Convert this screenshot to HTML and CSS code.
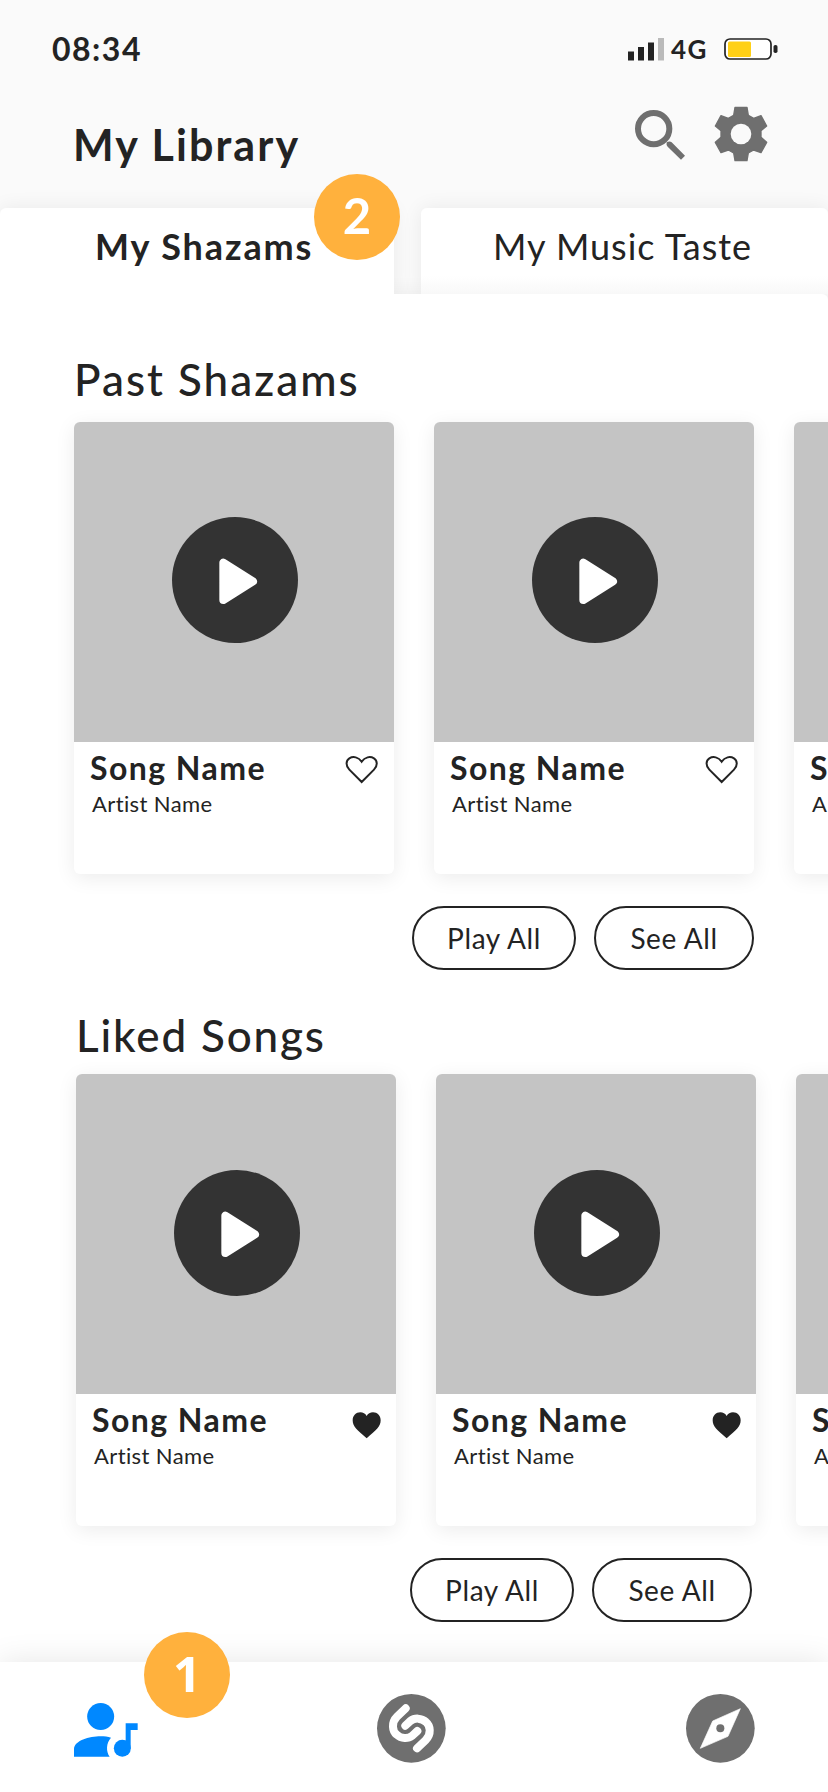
FILE: index.html
```html
<!DOCTYPE html>
<html lang="en">
<head>
<meta charset="utf-8">
<title>My Library</title>
<link rel="stylesheet" href="styles.css">
</head>
<body>
<svg class="defs" aria-hidden="true">
  <symbol id="play" viewBox="0 0 378 378">
    <circle cx="189" cy="189" r="189" fill="#333"/>
    <path d="M154 137V249L243 193Z" fill="#fff" stroke="#fff" stroke-width="24" stroke-linejoin="round"/>
  </symbol>
  <symbol id="heart" viewBox="886 105 102 90">
    <path d="M936 186L899 149C888 138 888 122 899 115C911 108 926 111 936 125C946 111 961 108 973 115C984 122 984 138 973 149Z" fill="none" stroke="#232323" stroke-width="6"/>
  </symbol>
  <symbol id="heart-full" viewBox="898 119 102 90">
    <path d="M948 204C919 179 906 168 906 150C906 136 916 126 929 126C937 126 944 130 948 137C952 130 959 126 967 126C980 126 990 136 990 150C990 168 977 179 948 204Z" fill="#232323"/>
  </symbol>
</svg>
<div class="screen">
  <header class="header">
    <div class="status">
      <span class="time">08:34</span>
      <div class="indicators">
        <svg class="signal" viewBox="0 0 36 23"><path d="M0 13.500h6V22.500H0zM10 9h6v13.500h-6zM20 4.500h6v18h-6z" fill="#232323"/><path d="M30 0h6v22.500h-6z" fill="#bababa"/></svg>
        <span class="network">4G</span>
        <svg class="battery" viewBox="0 0 54 22"><rect x="1" y="1" width="46" height="20" rx="5" fill="#fff" stroke="#232323" stroke-width="1.700"/><rect x="4" y="3.500" width="23" height="15.500" rx="1.500" fill="#ffd016"/><rect x="49.500" y="7" width="4" height="8" rx="1.800" fill="#232323"/></svg>
      </div>
    </div>
    <div class="titlebar">
      <h1 class="title">My Library</h1>
      <div class="actions">
        <svg class="search" viewBox="666 330 150 150"><circle cx="722" cy="386" r="47" fill="none" stroke="#6f6f6f" stroke-width="18"/><path d="M761 427Q759 437 764 440L804 479L816 467L776 427Q770 422 761 427Z" fill="#6f6f6f"/></svg>
        <svg class="gear" viewBox="-84 -84 168 168"><path d="M-18-80H18L22-56L38-47L60-55L77-24L60-10V10L77 25L60 56L38 48L22 57L18 80H-18L-22 57L-38 48L-60 56L-77 25L-60 10V-10L-77-24L-60-55L-38-47L-22-56Z" fill="#6f6f6f" stroke="#6f6f6f" stroke-width="4" stroke-linejoin="round"/><circle r="31" fill="#fafafa"/></svg>
      </div>
    </div>
  </header>
  <nav class="tabs">
    <a class="tab active"><span class="tab-on">My Shazams</span></a>
    <a class="tab other"><span class="tab-off">My Music Taste</span></a>
    <span class="badge badge-two">2</span>
  </nav>
  <main class="content">
    <section class="section past">
      <h2 class="heading past-heading">Past Shazams</h2>
      <div class="cards">
        <article class="card"><div class="cover"><svg class="play"><use href="#play"/></svg></div><div class="info"><div class="names"><h3 class="song">Song Name</h3><p class="artist">Artist Name</p></div><svg class="heart"><use href="#heart"/></svg></div></article>
        <article class="card"><div class="cover"><svg class="play"><use href="#play"/></svg></div><div class="info"><div class="names"><h3 class="song">Song Name</h3><p class="artist">Artist Name</p></div><svg class="heart"><use href="#heart"/></svg></div></article>
        <article class="card"><div class="cover"><svg class="play"><use href="#play"/></svg></div><div class="info"><div class="names"><h3 class="song">Song Name</h3><p class="artist">Artist Name</p></div><svg class="heart"><use href="#heart"/></svg></div></article>
      </div>
      <div class="buttons"><button class="pill play-all">Play All</button><button class="pill see-all">See All</button></div>
    </section>
    <section class="section liked">
      <h2 class="heading liked-heading">Liked Songs</h2>
      <div class="cards">
        <article class="card"><div class="cover"><svg class="play"><use href="#play"/></svg></div><div class="info"><div class="names"><h3 class="song">Song Name</h3><p class="artist">Artist Name</p></div><svg class="heart full"><use href="#heart-full"/></svg></div></article>
        <article class="card"><div class="cover"><svg class="play"><use href="#play"/></svg></div><div class="info"><div class="names"><h3 class="song">Song Name</h3><p class="artist">Artist Name</p></div><svg class="heart full"><use href="#heart-full"/></svg></div></article>
        <article class="card"><div class="cover"><svg class="play"><use href="#play"/></svg></div><div class="info"><div class="names"><h3 class="song">Song Name</h3><p class="artist">Artist Name</p></div><svg class="heart full"><use href="#heart-full"/></svg></div></article>
      </div>
      <div class="buttons"><button class="pill play-all">Play All</button><button class="pill see-all">See All</button></div>
    </section>
  </main>
  <footer class="navbar">
    <svg class="nav-user" viewBox="222 249 192 162"><g fill="#08f"><circle cx="302" cy="289.500" r="40.500"/><path d="M222 410V388C222 362 268 349 302 349C313 349 324 350 333 353C318 370 318 394 329 410Z"/><circle cx="367" cy="385" r="25.500"/><path d="M377 310H413V330H392V385H377Z"/></g></svg>
    <svg class="nav-shazam" viewBox="-103 -103 206 206"><circle r="103" fill="#6f6f6f"/><g fill="none" stroke="#fff" stroke-width="24" stroke-linecap="round" stroke-linejoin="round"><path d="M-17-60L-43-35C-61-17-57 8-44 19C-30 32-10 32 3 22L18 8"/><path d="M17 60L43 35C61 17 57-8 44-19C30-32 10-32-3-22L-18-8"/></g></svg>
    <svg class="nav-compass" viewBox="-103 -103 206 206"><circle r="103" fill="#6f6f6f"/><path d="M60-59L23 24L-60 60L-23-22Z" fill="#fff" stroke="#fff" stroke-width="2" stroke-linejoin="round"/><circle r="12" fill="#6f6f6f"/></svg>
    <span class="badge badge-one">1</span>
  </footer>
</div>
</body>
</html>
```

FILE: styles.css
```css
* { box-sizing: border-box; }
body { margin: 0; background: #fff; color: #232323; font-family: Lato, "Liberation Sans", sans-serif; }
h1, h2, h3, p { margin: 0; font-weight: 400; white-space: nowrap; }
svg { display: block; flex: none; }
.defs { position: absolute; width: 0; height: 0; }
.screen { width: 828px; height: 1792px; overflow: hidden; display: flex; flex-direction: column; background: #fafafa; }

.header { height: 208px; flex: none; }
.status { height: 98px; padding: 0 50px 0 52px; display: flex; justify-content: space-between; align-items: center; }
.time { font-size: 32px; font-weight: 700; line-height: 40px; letter-spacing: 1.500px; }
.indicators { display: flex; align-items: center; }
.signal { width: 36px; height: 23px; margin-top: 1px; }
.network { font-size: 26px; font-weight: 700; line-height: 30px; width: 53px; margin: 0 0 0 7px; letter-spacing: 1.500px; }
.battery { width: 54px; height: 22px; }
.titlebar { padding: 0 59px 0 73px; display: flex; justify-content: space-between; align-items: flex-start; }
.title { font-size: 43px; font-weight: 700; line-height: 52px; padding-top: 21px; letter-spacing: 2.100px; }
.actions { display: flex; gap: 28px; padding-top: 8px; }
.search { width: 50px; height: 50px; margin-top: 4px; }
.gear { width: 56px; height: 56px; }

.tabs { height: 86px; flex: none; display: flex; justify-content: space-between; position: relative; z-index: 2; }
.tab { height: 86px; background: #fff; border-radius: 6px 6px 0 0; box-shadow: 0 0 20px rgba(0,0,0,.07); line-height: 40px; padding-top: 18px; font-size: 36px; white-space: nowrap; clip-path: inset(-30px -30px 0 -30px); }
.active { width: 394px; padding-left: 95px; font-weight: 700; }
/* The panel's shadow falls on the inactive tab */
.other { width: 407px; padding-left: 72px; background: linear-gradient(#fff 68px, #f8f8f8); }
.tab-on { letter-spacing: 1.900px; }
.tab-off { letter-spacing: 1px; }
.badge { position: absolute; width: 86px; height: 86px; border-radius: 50%; background: #ffb13d; color: #fff; font: 700 49px/82px "Noto Sans", sans-serif; text-align: center; }
.badge-two { left: 314px; top: -34px; font-family: Lato, sans-serif; }
.badge-one { left: 144px; top: -30px; }

.content { height: 1368px; flex: none; background: #fff; border-radius: 0 6px 0 0; box-shadow: 0 0 20px rgba(0,0,0,.07); position: relative; z-index: 1; }
.heading { font-size: 44px; font-weight: 500; line-height: 52px; }
.past-heading { letter-spacing: 2px; }
.liked-heading { letter-spacing: 1.850px; }
.past { padding: 59px 0 0 74px; }
.liked { padding: 39px 0 0 76px; }
.past .cards { display: flex; gap: 40px; margin-top: 16.500px; }
.liked .cards { display: flex; gap: 40px; margin-top: 13px; }
.card { width: 320px; height: 452px; flex: none; border-radius: 6px; background: #fff; box-shadow: 0 4px 20px rgba(0,0,0,.08); overflow: hidden; }
.cover { height: 320px; background: #c4c4c4; display: flex; justify-content: center; padding: 95.500px 0 0 2px; }
.liked .cover { padding-top: 96px; }
.play { width: 126px; height: 126px; }
.info { display: flex; justify-content: space-between; padding: 6px 15px 0 16px; }
.song { font-size: 32px; font-weight: 700; line-height: 40px; letter-spacing: 1.450px; }
.artist { font-size: 22px; line-height: 28px; padding: 2px 0 0 2px; letter-spacing: .4px; }
.heart { width: 34px; height: 30px; margin-top: 7.500px; }
.full { margin-top: 9.700px; margin-right: -3px; }
.buttons { display: flex; justify-content: flex-end; gap: 18px; margin-top: 32.500px; padding-right: 74px; }
.liked .buttons { margin-top: 32px; padding-right: 76px; }
.pill { height: 64px; border: 2px solid #232323; border-radius: 32px; background: #fff; color: #232323; font: 400 28px/40px Lato, sans-serif; letter-spacing: .600px; padding: 0; }
.play-all { width: 164px; }
.see-all { width: 160px; }

.navbar { height: 130px; flex: none; background: #fff; box-shadow: 0 0 30px rgba(0,0,0,.1); position: relative; z-index: 3; display: flex; justify-content: space-between; padding: 32px 73px 0 74px; }
.nav-user { width: 64px; height: 54px; margin-top: 9px; }
.nav-shazam { width: 68.700px; height: 68.700px; margin-left: -1px; }
.nav-compass { width: 68.700px; height: 68.700px; }
```
